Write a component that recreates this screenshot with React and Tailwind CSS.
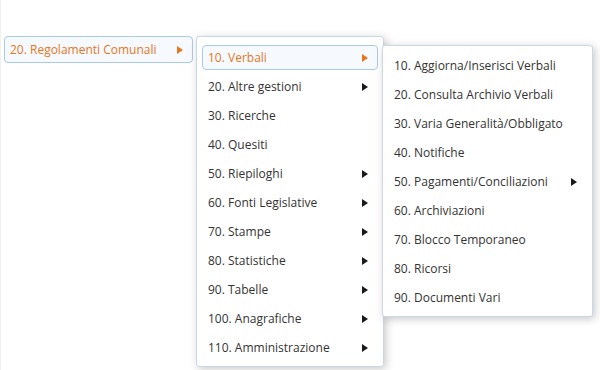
import React from "react";

const level2 = [
  { label: "10. Verbali", sub: true, active: true },
  { label: "20. Altre gestioni", sub: true },
  { label: "30. Ricerche" },
  { label: "40. Quesiti" },
  { label: "50. Riepiloghi", sub: true },
  { label: "60. Fonti Legislative", sub: true },
  { label: "70. Stampe", sub: true },
  { label: "80. Statistiche", sub: true },
  { label: "90. Tabelle", sub: true },
  { label: "100. Anagrafiche", sub: true },
  { label: "110. Amministrazione", sub: true },
];

const level3 = [
  { label: "10. Aggiorna/Inserisci Verbali" },
  { label: "20. Consulta Archivio Verbali" },
  { label: "30. Varia Generalità/Obbligato" },
  { label: "40. Notifiche" },
  { label: "50. Pagamenti/Conciliazioni", sub: true },
  { label: "60. Archiviazioni" },
  { label: "70. Blocco Temporaneo" },
  { label: "80. Ricorsi" },
  { label: "90. Documenti Vari" },
];

function Arrow({ active }) {
  return (
    <span
      className={`w-0 h-0 border-y-[4px] border-y-transparent border-l-[6px] ${
        active ? "border-l-[#e8761c]" : "border-l-[#1a1a1a]"
      }`}
    />
  );
}

function Item({ label, sub, active }) {
  return (
    <div
      className={`mx-[5px] my-[2px] h-[25px] shrink-0 flex items-center justify-between pl-[5px] pr-[9px] rounded-[4px] border ${
        active
          ? "border-[#a9cbea] bg-[#f6faff] text-[#e8761c]"
          : "border-transparent text-[#333]"
      }`}
    >
      <span>{label}</span>
      {sub && <Arrow active={active} />}
    </div>
  );
}

export default function App() {
  return (
    <div
      className="w-[600px] h-[370px] bg-white border-l border-[#eef2f6] overflow-hidden text-[12px]"
      style={{ fontFamily: '"Open Sans", "Liberation Sans", sans-serif' }}
    >
      <div className="flex items-start pt-[36px] pl-[3px]">
        <div className="w-[189px] h-[27px] flex items-center justify-between pl-[5px] pr-[9px] rounded-[4px] border border-[#a9cbea] bg-[#f6faff] text-[#e8761c]">
          <span>20. Regolamenti Comunali</span>
          <Arrow active />
        </div>

        <div className="ml-[3px] w-[188px] flex flex-col pt-[6px] pb-[4px] bg-white border border-[#c9d8e6] rounded-[3px] shadow-[2px_2px_8px_rgba(0,0,0,0.22)]">
          {level2.map((it) => (
            <Item key={it.label} {...it} />
          ))}
        </div>

        <div className="relative z-10 -ml-[2px] mt-[9px] w-[211px] flex flex-col pt-[5px] pb-[4px] bg-white border border-[#c9d8e6] rounded-[3px] shadow-[2px_2px_8px_rgba(0,0,0,0.22)]">
          {level3.map((it) => (
            <Item key={it.label} {...it} />
          ))}
        </div>
      </div>
    </div>
  );
}
